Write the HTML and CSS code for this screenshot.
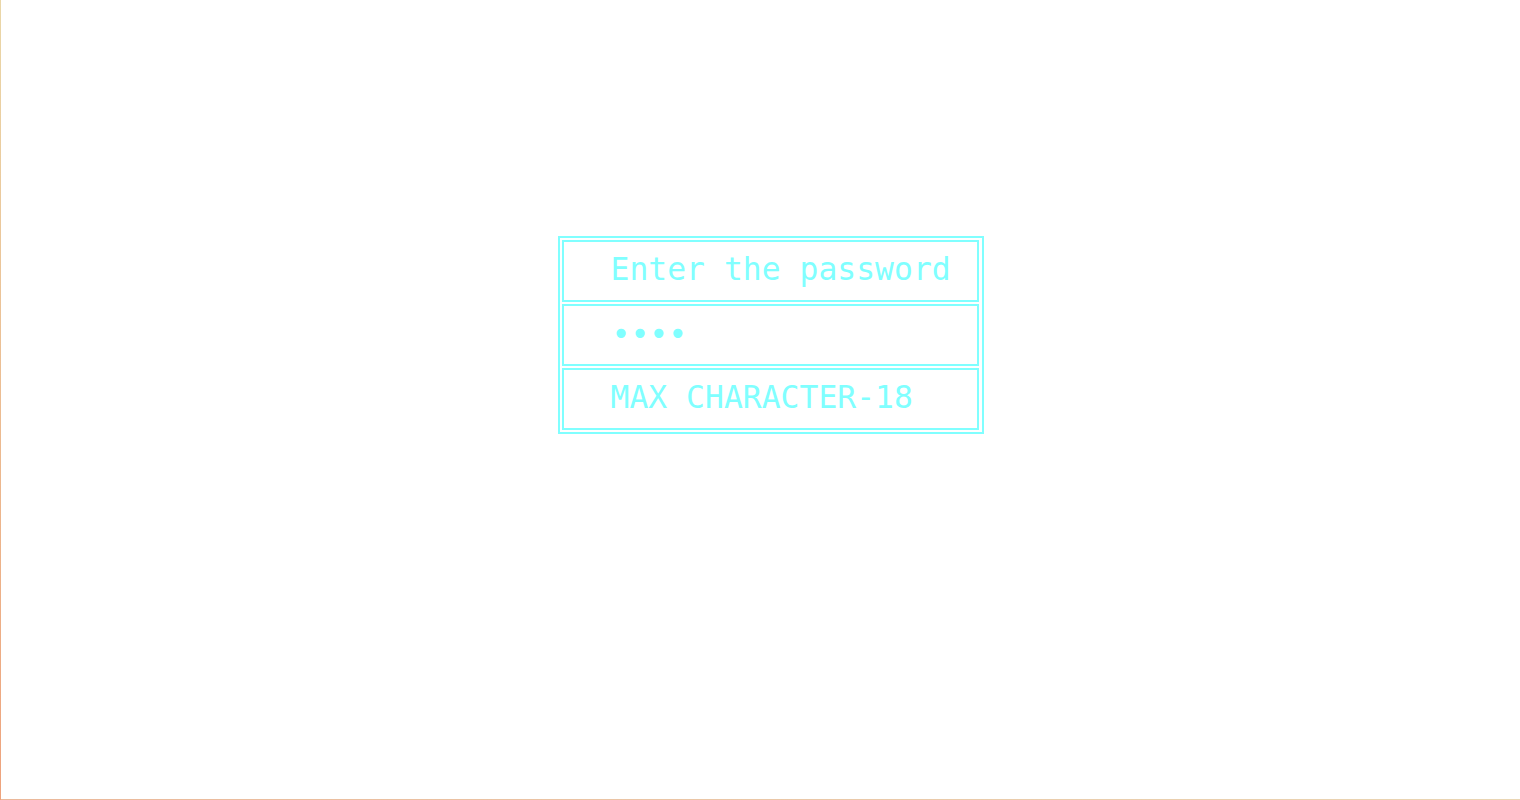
FILE: index.html
```html
<!DOCTYPE html>
<html lang="en">
<head>
<meta charset="utf-8">
<title>Password</title>
<link rel="stylesheet" href="styles.css">
</head>
<body>
<div class="page">
  <div class="panel">
    <div class="cell">Enter the password</div>
    <div class="cell dots">••••</div>
    <div class="cell">MAX CHARACTER-18</div>
  </div>
</div>
</body>
</html>
```
FILE: styles.css
```css
html, body {
  margin: 0;
  padding: 0;
  background: #ffffff;
}

.page {
  box-sizing: border-box;
  width: 1520px;
  height: 800px;
  padding: 236px 0 0 21px;
  display: flex;
  flex-direction: column;
  align-items: center;
  background:
    linear-gradient(to bottom, #ead7a8, #eea37d) left top / 1px 100% no-repeat,
    linear-gradient(to right, #ebb89a, #ead6b4) left bottom / 100% 1px no-repeat,
    #ffffff;
}

.panel {
  box-sizing: border-box;
  width: 426px;
  height: 198px;
  border: 2px solid #80ffff;
  padding: 2px 3px 2px 2px;
  display: flex;
  flex-direction: column;
  gap: 2px;
}

.cell {
  box-sizing: border-box;
  height: 62px;
  border: 2px solid #80ffff;
  padding: 0 0 5px 47px;
  display: flex;
  align-items: center;
  font-family: "DejaVu Sans Mono", monospace;
  font-size: 31.4px;
  color: #80ffff;
  white-space: pre;
}

.dots {
  padding-left: 48px;
  padding-bottom: 3px;
}
```
